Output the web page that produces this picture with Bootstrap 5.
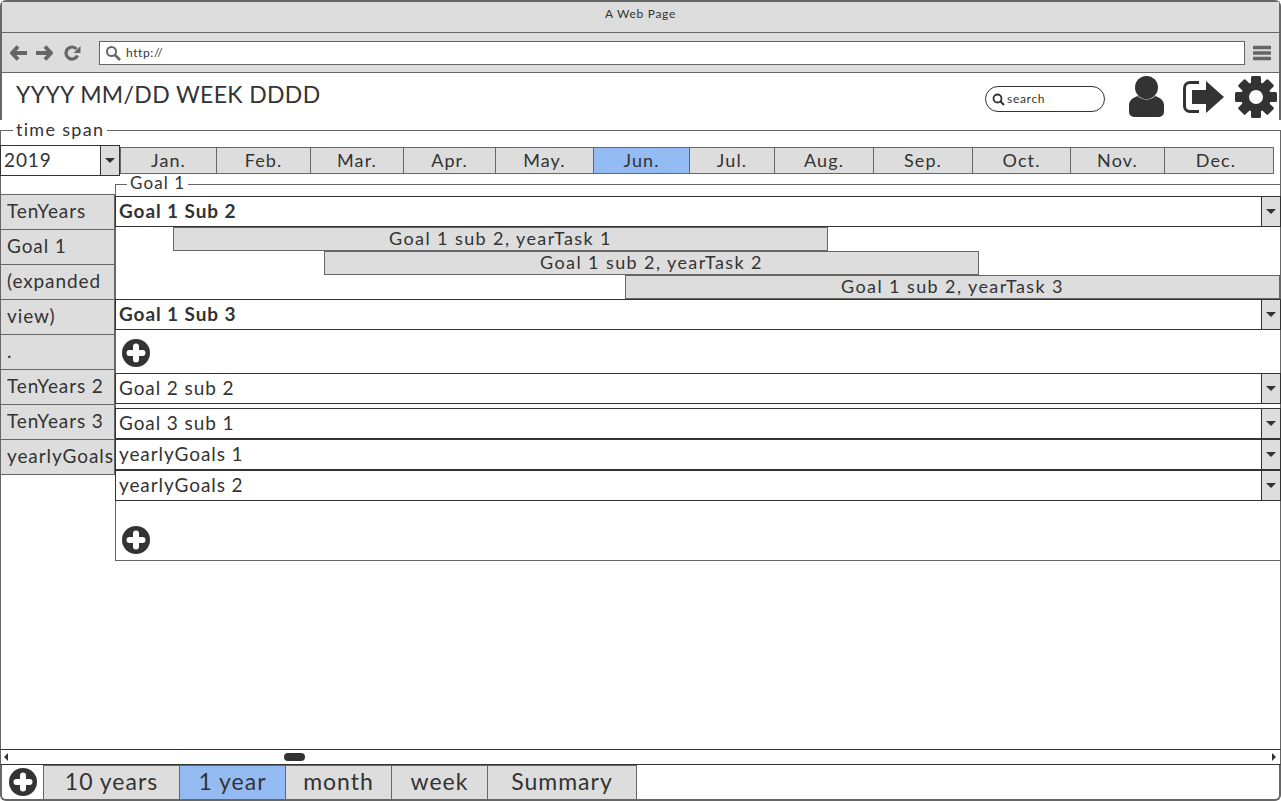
<!DOCTYPE html>
<html lang="en">
<head>
    <meta charset="UTF-8">
    <meta name="viewport" content="width=device-width, initial-scale=1.0">
    <title>A Web Page</title>
    <link href="https://cdn.jsdelivr.net/npm/bootstrap@5.3.0/dist/css/bootstrap.min.css" rel="stylesheet">
    <script src="https://cdn.jsdelivr.net/npm/bootstrap@5.3.0/dist/js/bootstrap.bundle.min.js"></script>
    <style>
        html, body {
            height: 801px;
            overflow: hidden;
        }
        body {
            background-color: #fff;
            color: #333;
            font-family: "Lato", "Liberation Sans", sans-serif;
            font-size: 19px;
            letter-spacing: .9px;
        }
        .wire-page {
            width: 1281px;
            height: 801px;
        }
        .wire-top {
            border: 2px solid #666;
            border-bottom: 0;
            border-radius: 6px 6px 0 0;
        }
        .title-strip {
            height: 31px;
            background-color: #ddd;
            border-bottom: 1px solid #666;
            font-size: 12px;
            letter-spacing: .7px;
            padding-top: 3px;
        }
        .tool-strip {
            height: 40px;
            background-color: #ddd;
            border-bottom: 1px solid #666;
            padding: 0 8px;
        }
        .url-box {
            flex: 1;
            height: 24px;
            margin: 0 8px 0 18px;
            background-color: #fff;
            border: 1px solid #666;
            font-size: 12px;
            letter-spacing: .6px;
            padding-left: 5px;
        }
        .url-box svg { margin-right: 5px; }
        .head-strip {
            height: 47px;
            padding: 0 2px 0 14px;
        }
        .date-title {
            font-size: 23px;
            letter-spacing: .35px;
            margin-bottom: 4px;
        }
        .search-pill {
            width: 120px;
            height: 26px;
            margin-top: 5px;
            border: 1px solid #333;
            font-size: 12px;
            letter-spacing: .7px;
            padding-left: 6px;
        }
        .search-pill svg { margin-right: 2px; }
        .icon-user { margin-left: 24px; }
        .icon-exit { margin-left: 18px; }
        .icon-gear { margin-left: 11px; }
        .nudge-next { margin-left: 7px; }
        .nudge-reload { margin-left: 11px; }
        fieldset.span-box, fieldset.goal-box {
            border: 1px solid #666;
            padding: 0;
            margin: 0;
            min-width: 0;
        }
        fieldset.span-box {
            height: 628px;
            margin-top: 1px;
            border-bottom: 0;
        }
        fieldset.goal-box {
            width: 1166px;
            height: 386px;
        }
        fieldset.span-box > legend, fieldset.goal-box > legend {
            float: none;
            width: auto;
            height: 18px;
            margin: 0 0 0 11px;
            font-size: 17px;
            line-height: 16px;
            padding: 0 3px;
            letter-spacing: 1.1px;
        }
        fieldset.span-box > legend {
            font-size: 18px;
            letter-spacing: 1.3px;
            margin-left: 12px;
        }
        .span-inner {
            margin: 6px -1px 0;
        }
        .year-pick {
            width: 120px;
            height: 31px;
            flex: none;
        }
        .pick-box {
            display: flex;
            height: 31px;
            margin: 0 -1px;
            border: 1px solid #333;
            background-color: #fff;
        }
        .pick-box.is-bold { font-weight: 700; }
        .pick-text {
            flex: 1;
            padding-left: 3px;
            line-height: 28px;
        }
        .pick-arrow {
            flex: none;
            width: 19px;
            background-color: #ddd;
            border-left: 1px solid #333;
            display: flex;
            align-items: center;
            justify-content: center;
        }
        .pick-arrow::after {
            content: "";
            border: 5px solid transparent;
            border-top: 5px solid #333;
            border-bottom: 0;
        }
        .year-pick .pick-box { margin: 0; }
        .month-tabs {
            margin-top: 2px;
            height: 27px;
            border-right: 1px solid #666;
        }
        .month-tab {
            height: 27px;
            background-color: #ddd;
            border: 1px solid #666;
            border-right: 0;
            line-height: 25px;
            text-align: center;
            font-size: 18px;
            letter-spacing: 1.1px;
        }
        .month-tab.is-on, .bottom-tab.is-on { background-color: #94bcf2; }
        .month-tab:nth-child(1) { width: 96px; }
        .month-tab:nth-child(2) { width: 94px; }
        .month-tab:nth-child(3) { width: 93px; }
        .month-tab:nth-child(4) { width: 92px; }
        .month-tab:nth-child(5) { width: 98px; }
        .month-tab:nth-child(6) { width: 96px; }
        .month-tab:nth-child(7) { width: 85px; }
        .month-tab:nth-child(8) { width: 99px; }
        .month-tab:nth-child(9) { width: 99px; }
        .month-tab:nth-child(10) { width: 98px; }
        .month-tab:nth-child(11) { width: 94px; }
        .month-tab:nth-child(12) { width: 109px; padding-right: 6px; }
        .span-lower { margin-top: -1px; }
        .side-list {
            width: 115px;
            flex: none;
            margin-top: 19px;
            border-radius: 0;
            --bs-list-group-bg: #ddd;
            --bs-list-group-color: #333;
            --bs-list-group-border-color: #666;
            --bs-list-group-border-radius: 0;
            --bs-list-group-item-padding-x: 6px;
            --bs-list-group-item-padding-y: 0;
            align-self: flex-start;
        }
        .side-list .list-group-item {
            height: 35px;
            line-height: 32px;
            white-space: nowrap;
            letter-spacing: .9px;
        }
        .side-list .list-group-item:first-child { height: 36px; }
        .goal-top { padding-top: 3px; }
        .task-bar {
            height: 24px;
            background-color: #ddd;
            border: 1px solid #666;
            line-height: 20px;
            text-align: center;
            white-space: nowrap;
            font-size: 18px;
            letter-spacing: 1.4px;
        }
        .task-a { margin-left: 57px; width: 655px; }
        .task-b { margin-left: 208px; width: 655px; }
        .task-c { margin-left: 509px; width: 655px; }
        .add-one { height: 43px; padding: 7px 0 0 6px; }
        .add-two { height: 59px; padding: 23px 0 0 6px; }
        .pick-gap { margin-top: 4px; }
        .scroll-strip {
            height: 16px;
            border-top: 1px solid #333;
            border-bottom: 1px solid #333;
            border-left: 1px solid #666;
            border-right: 1px solid #666;
            padding: 0 4px 0 3px;
        }
        .scroll-left {
            border: 4px solid transparent;
            border-left: 0;
            border-right: 4px solid #333;
        }
        .scroll-right {
            border: 4px solid transparent;
            border-right: 0;
            border-left: 4px solid #333;
        }
        .scroll-thumb {
            width: 21px;
            height: 8px;
            margin-left: 276px;
            background-color: #333;
            border-radius: 4px;
        }
        .bottom-strip {
            height: 36px;
            border: 2px solid #666;
            border-top: 0;
            border-radius: 0 0 6px 6px;
        }
        .bottom-add { width: 41px; padding-left: 7px; padding-top: 3px; }
        .bottom-tab {
            height: 36px;
            background-color: #ddd;
            border: 1px solid #666;
            border-bottom-width: 2px;
            border-right: 0;
            font-size: 23px;
            line-height: 31px;
            text-align: center;
            letter-spacing: 1px;
        }
        .bottom-tab:nth-child(2) { width: 136px; }
        .bottom-tab:nth-child(3) { width: 106px; }
        .bottom-tab:nth-child(4) { width: 106px; }
        .bottom-tab:nth-child(5) { width: 96px; }
        .bottom-tab:nth-child(6) { width: 150px; border-right: 1px solid #666; }
    </style>
</head>
<body>
<svg width="0" height="0" class="d-block">
    <symbol id="plusRound" viewBox="0 0 28 28">
        <circle cx="14" cy="14" r="14" fill="#333"/>
        <path d="M14 7.500v13M7.500 14h13" stroke="#fff" stroke-width="6" stroke-linecap="round"/>
    </symbol>
</svg>

<div class="wire-page d-flex flex-column">
    <!-- Browser chrome -->
    <div class="wire-top">
        <div class="title-strip text-center">A Web Page</div>
        <div class="tool-strip d-flex align-items-center">
            <svg width="18" height="16" viewBox="0 0 18 16">
                <path d="M8 1.500 2 8l6 6.500M2.500 8H17" fill="none" stroke="#666" stroke-width="4" stroke-linejoin="round"/>
            </svg>
            <svg width="18" height="16" viewBox="0 0 18 16" class="nudge-next">
                <path d="M10 1.500 16 8l-6 6.500M15.500 8H1" fill="none" stroke="#666" stroke-width="4" stroke-linejoin="round"/>
            </svg>
            <svg width="17" height="16" viewBox="0 0 17 16" class="nudge-reload">
                <path d="M13.500 10.500A6 6 0 1 1 12.500 4" fill="none" stroke="#666" stroke-width="3.200"/>
                <path d="M16.500 1v7h-7z" fill="#666"/>
            </svg>
            <div class="url-box d-flex align-items-center">
                <svg width="16" height="16" viewBox="0 0 16 16">
                    <circle cx="6.500" cy="6.500" r="4.500" fill="none" stroke="#666" stroke-width="2"/>
                    <path d="M10 10l5 5" stroke="#666" stroke-width="2.600"/>
                </svg>
                <span>http://</span>
            </div>
            <svg width="18" height="16" viewBox="0 0 18 16">
                <path d="M1 2.500h16M1 8h16M1 13.500h16" stroke="#666" stroke-width="3.400" stroke-linecap="round"/>
            </svg>
        </div>
        <div class="head-strip d-flex align-items-center">
            <div class="date-title">YYYY MM/DD WEEK DDDD</div>
            <div class="search-pill rounded-pill d-flex align-items-center ms-auto">
                <svg width="13" height="13" viewBox="0 0 13 13">
                    <circle cx="5.500" cy="5.500" r="4" fill="none" stroke="#333" stroke-width="1.800"/>
                    <path d="M8.500 8.500l3.500 3.500" stroke="#333" stroke-width="2"/>
                </svg>
                <span>search</span>
            </div>
            <svg class="icon-user" width="35" height="41" viewBox="0 0 35 41">
                <circle cx="17.500" cy="11.500" r="11.500" fill="#333"/>
                <path d="M0 36v-7c0-5 5-8 9-9 3 4.500 14 4.500 17 0 4 1 9 4 9 9v7a5 5 0 0 1-5 5H5a5 5 0 0 1-5-5z" fill="#333"/>
            </svg>
            <svg class="icon-exit" width="42" height="36" viewBox="0 0 42 36">
                <path d="M17 3.500H8a5.500 5.500 0 0 0-5.500 5.500v18A5.500 5.500 0 0 0 8 32.500h9" fill="none" stroke="#333" stroke-width="3"/>
                <path d="M10 11h14V2l18 16-18 16v-9H10z" fill="#333"/>
            </svg>
            <svg class="icon-gear" width="42" height="42" viewBox="0 0 42 42">
                <g fill="#333">
                    <rect x="16" y="0" width="10" height="42" rx="1.500"/>
                    <rect x="16" y="0" width="10" height="42" rx="1.500" transform="rotate(45 21 21)"/>
                    <rect x="16" y="0" width="10" height="42" rx="1.500" transform="rotate(90 21 21)"/>
                    <rect x="16" y="0" width="10" height="42" rx="1.500" transform="rotate(135 21 21)"/>
                </g>
                <circle cx="21" cy="21" r="11" fill="none" stroke="#333" stroke-width="8"/>
                <circle cx="21" cy="21" r="7" fill="#fff"/>
            </svg>
        </div>
    </div>

    <!-- Time span -->
    <fieldset class="span-box">
        <legend>time span</legend>
        <div class="span-inner">
            <div class="d-flex">
                <div class="year-pick">
                    <div class="pick-box">
                        <div class="pick-text">2019</div>
                        <div class="pick-arrow"></div>
                    </div>
                </div>
                <div class="month-tabs d-flex">
                    <div class="month-tab">Jan.</div>
                    <div class="month-tab">Feb.</div>
                    <div class="month-tab">Mar.</div>
                    <div class="month-tab">Apr.</div>
                    <div class="month-tab">May.</div>
                    <div class="month-tab is-on">Jun.</div>
                    <div class="month-tab">Jul.</div>
                    <div class="month-tab">Aug.</div>
                    <div class="month-tab">Sep.</div>
                    <div class="month-tab">Oct.</div>
                    <div class="month-tab">Nov.</div>
                    <div class="month-tab">Dec.</div>
                </div>
            </div>
            <div class="span-lower d-flex">
                <ul class="list-group side-list">
                    <li class="list-group-item">TenYears</li>
                    <li class="list-group-item">Goal 1</li>
                    <li class="list-group-item">(expanded</li>
                    <li class="list-group-item">view)</li>
                    <li class="list-group-item">.</li>
                    <li class="list-group-item">TenYears 2</li>
                    <li class="list-group-item">TenYears 3</li>
                    <li class="list-group-item">yearlyGoals</li>
                </ul>
                <fieldset class="goal-box">
                    <legend>Goal 1</legend>
                    <div class="goal-top">
                        <div class="pick-box is-bold">
                            <div class="pick-text">Goal 1 Sub 2</div>
                            <div class="pick-arrow"></div>
                        </div>
                        <div class="task-bar task-a">Goal 1 sub 2, yearTask 1</div>
                        <div class="task-bar task-b">Goal 1 sub 2, yearTask 2</div>
                        <div class="task-bar task-c">Goal 1 sub 2, yearTask 3</div>
                        <div class="pick-box is-bold">
                            <div class="pick-text">Goal 1 Sub 3</div>
                            <div class="pick-arrow"></div>
                        </div>
                        <div class="add-one"><svg width="28" height="28"><use href="#plusRound"/></svg></div>
                        <div class="pick-box">
                            <div class="pick-text">Goal 2 sub 2</div>
                            <div class="pick-arrow"></div>
                        </div>
                        <div class="pick-box pick-gap">
                            <div class="pick-text">Goal 3 sub 1</div>
                            <div class="pick-arrow"></div>
                        </div>
                        <div class="pick-box">
                            <div class="pick-text">yearlyGoals 1</div>
                            <div class="pick-arrow"></div>
                        </div>
                        <div class="pick-box">
                            <div class="pick-text">yearlyGoals 2</div>
                            <div class="pick-arrow"></div>
                        </div>
                        <div class="add-two"><svg width="28" height="28"><use href="#plusRound"/></svg></div>
                    </div>
                </fieldset>
            </div>
        </div>
    </fieldset>

    <!-- Scroll and view tabs -->
    <div class="scroll-strip d-flex align-items-center">
        <div class="scroll-left"></div>
        <div class="scroll-thumb"></div>
        <div class="scroll-right ms-auto"></div>
    </div>
    <div class="bottom-strip d-flex">
        <div class="bottom-add"><svg width="28" height="28" class="d-block"><use href="#plusRound"/></svg></div>
        <div class="bottom-tab">10 years</div>
        <div class="bottom-tab is-on">1 year</div>
        <div class="bottom-tab">month</div>
        <div class="bottom-tab">week</div>
        <div class="bottom-tab">Summary</div>
    </div>
</div>
</body>
</html>
